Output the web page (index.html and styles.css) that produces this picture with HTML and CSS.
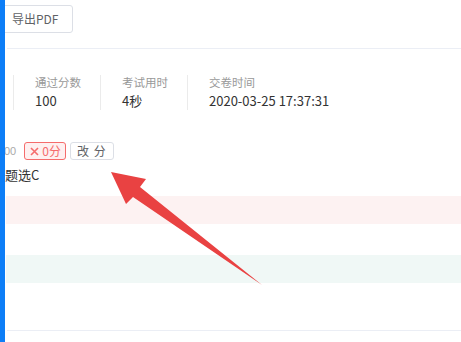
FILE: index.html
```html
<!DOCTYPE html>
<html lang="zh">
<head>
<meta charset="utf-8">
<title>考试结果</title>
<link rel="stylesheet" href="styles.css">
</head>
<body>
<div class="page">
  <div class="side"></div>
  <div class="main">
    <div class="toolbar">
      <button class="btn btn-export">导出PDF</button>
    </div>
    <div class="stats">
      <div class="stat">
        <div class="label">通过分数</div>
        <div class="value">100</div>
      </div>
      <div class="stat">
        <div class="label">考试用时</div>
        <div class="value">4秒</div>
      </div>
      <div class="stat">
        <div class="label">交卷时间</div>
        <div class="value">2020-03-25 17:37:31</div>
      </div>
    </div>
    <div class="score-row">
      <span class="full">00</span>
      <span class="tag-wrong"><svg class="x" width="9" height="9" viewBox="0 0 9 9"><path d="M1 1L8 8M8 1L1 8" stroke="#f56c6c" stroke-width="1.6" fill="none"/></svg>0分</span>
      <button class="btn btn-edit">改 分</button>
    </div>
    <div class="answer">题选C</div>
    <div class="band band-wrong"></div>
    <div class="band band-right"></div>
    <div class="bottom-line"></div>
  </div>
</div>
<svg class="arrow" width="461" height="342" viewBox="0 0 461 342">
  <polygon points="111,172 146,179 140,187 262,285 133,197 126,204" fill="#e94242"/>
</svg>
</body>
</html>
```
FILE: styles.css
```css
html, body {
  margin: 0;
  padding: 0;
  background: #fff;
}
body {
  font-family: "Noto Sans CJK SC", "Liberation Sans", sans-serif;
  color: #333;
  width: 461px;
  height: 342px;
  overflow: hidden;
  position: relative;
}
.page {
  display: flex;
  height: 342px;
}
.side {
  width: 5px;
  flex: none;
  background: #0d7ef7;
}
.main {
  flex: 1;
  overflow: hidden;
  display: flex;
  flex-direction: column;
}
.btn {
  font-family: inherit;
  background: #fff;
  border: 1px solid #dcdfe6;
  border-radius: 3px;
  color: #606266;
  padding: 0;
  cursor: pointer;
}
.toolbar {
  height: 49px;
  box-sizing: border-box;
  border-bottom: 1px solid #ebeef5;
  margin-left: 2px;
  padding-top: 5px;
  display: flex;
  align-items: flex-start;
}
.btn-export {
  height: 28px;
  margin-left: -11px;
  padding: 0 14px 0 15px;
  font-size: 12px;
  line-height: 26px;
}
.stats {
  display: flex;
  margin-top: 26px;
  padding-left: 8px;
}
.stat {
  box-sizing: border-box;
  width: 87px;
  border-left: 1px solid #ebebeb;
  padding-left: 21px;
  flex: none;
}
.stat:last-child {
  width: auto;
}
.label {
  font-size: 11.5px;
  line-height: 14px;
  color: #999;
}
.value {
  font-size: 13px;
  line-height: 18px;
  margin-top: 3px;
  color: #333;
}
.score-row {
  display: flex;
  align-items: center;
  margin-top: 32px;
  margin-left: -1px;
  height: 18px;
}
.full {
  font-size: 11px;
  color: #aaa;
  font-family: "Liberation Sans", sans-serif;
  margin-right: 8px;
}
.tag-wrong {
  display: inline-flex;
  align-items: center;
  box-sizing: border-box;
  height: 18px;
  padding: 0 4px 0 5px;
  border: 1px solid #f56c6c;
  border-radius: 3px;
  background: #fef0f0;
  color: #f56c6c;
  font-size: 12px;
  line-height: 16px;
}
.tag-wrong .x {
  margin-right: 3px;
  flex: none;
}
.btn-edit {
  margin-left: 4px;
  height: 18px;
  width: 44px;
  font-size: 12px;
  line-height: 16px;
  letter-spacing: 1px;
}
.answer {
  font-size: 13px;
  line-height: 20px;
  margin-top: 5px;
  margin-left: 0;
  color: #333;
}
.band {
  height: 28px;
  margin-left: 1px;
}
.band-wrong {
  margin-top: 11px;
  background: #fdf2f2;
}
.band-right {
  margin-top: 31px;
  background: #f0f8f6;
}
.bottom-line {
  margin-top: 47px;
  margin-left: 2px;
  height: 1px;
  background: #ebeef5;
}
.arrow {
  position: absolute;
  left: 0;
  top: 0;
  pointer-events: none;
}
```
